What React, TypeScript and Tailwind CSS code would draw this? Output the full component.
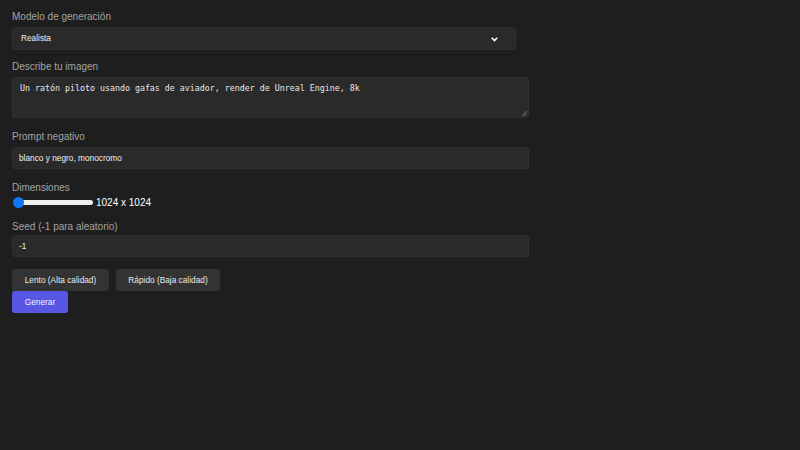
import React from "react";

const labelCls =
  "block text-[10px] leading-[12px] text-[#a3a3a3] font-['Liberation_Sans',Arial,sans-serif]";
const ctrlFont = "font-['Liberation_Sans',Arial,sans-serif] text-[8.3px]";

export default function App() {
  return (
    <div className="w-[800px] h-[450px] bg-[#1e1e1e] overflow-hidden font-['Liberation_Sans',Arial,sans-serif]">
      <div className="flex flex-col pl-[12px] pt-[11px]">
        <label className={labelCls}>Modelo de generación</label>
        <div className="relative mt-[4px] w-[504px] h-[23px] rounded-[3px] bg-[#2a2a2a] border border-[#303030] flex items-center pl-[8px]">
          <span className={`${ctrlFont} text-[#f0f0f0]`}>Realista</span>
          <svg
            className="absolute right-[17px] top-[9px]"
            width="7"
            height="5"
            viewBox="0 0 7 5"
          >
            <path d="M0.8 0.8 L3.5 3.6 L6.2 0.8" fill="none" stroke="#ffffff" strokeWidth="1.5" />
          </svg>
        </div>

        <label className={`${labelCls} mt-[11px]`}>Describe tu imagen</label>
        <div className="relative mt-[4px] w-[517px] h-[41px] rounded-[3px] bg-[#2a2a2a] border border-[#303030] pl-[7px] pt-[5px]">
          <div className="font-['DejaVu_Sans_Mono',monospace] text-[8.3px] leading-[10px] text-[#e8e8e8] whitespace-pre">
            Un ratón piloto usando gafas de aviador, render de Unreal Engine, 8k
          </div>
          <svg className="absolute right-[1px] bottom-[1px]" width="6" height="6" viewBox="0 0 6 6">
            <path d="M1 6 L6 1 M3.5 6 L6 3.5" stroke="#8a8a8a" strokeWidth="0.8" />
          </svg>
        </div>

        <label className={`${labelCls} mt-[13px]`}>Prompt negativo</label>
        <div className="mt-[4px] w-[517px] h-[22px] rounded-[3px] bg-[#2a2a2a] border border-[#303030] flex items-center pl-[6px]">
          <span className={`${ctrlFont} text-[#f0f0f0]`}>blanco y negro, monocromo</span>
        </div>

        <label className={`${labelCls} mt-[13px]`}>Dimensiones</label>
        <div className="mt-[2px] flex items-center h-[13px]">
          <div className="relative w-[81px] h-[13px] flex items-center">
            <div className="ml-[5px] w-[76px] h-[5px] rounded-full bg-[#efefef]" />
            <div className="absolute left-[1px] top-[1px] w-[11px] h-[11px] rounded-full bg-[#0e77f2]" />
          </div>
          <span className="ml-[3px] text-[10px] leading-[12px] text-white">1024 x 1024</span>
        </div>

        <label className={`${labelCls} mt-[12px]`}>Seed (-1 para aleatorio)</label>
        <div className="mt-[2px] w-[517px] h-[22px] rounded-[3px] bg-[#2a2a2a] border border-[#303030] flex items-center pl-[6px]">
          <span className={`${ctrlFont} text-[#f0f0f0]`}>-1</span>
        </div>

        <div className="mt-[12px] flex gap-[7px]">
          <div className={`w-[97px] h-[22px] rounded-[3px] bg-[#333333] flex items-center justify-center ${ctrlFont} text-[#eaeaea]`}>
            Lento (Alta calidad)
          </div>
          <div className={`w-[104px] h-[22px] rounded-[3px] bg-[#333333] flex items-center justify-center ${ctrlFont} text-[#eaeaea]`}>
            Rápido (Baja calidad)
          </div>
        </div>
        <div className={`w-[56px] h-[22px] rounded-[3px] bg-[#5757e4] flex items-center justify-center ${ctrlFont} text-[#f2f2ff]`}>
          Generar
        </div>
      </div>
    </div>
  );
}
